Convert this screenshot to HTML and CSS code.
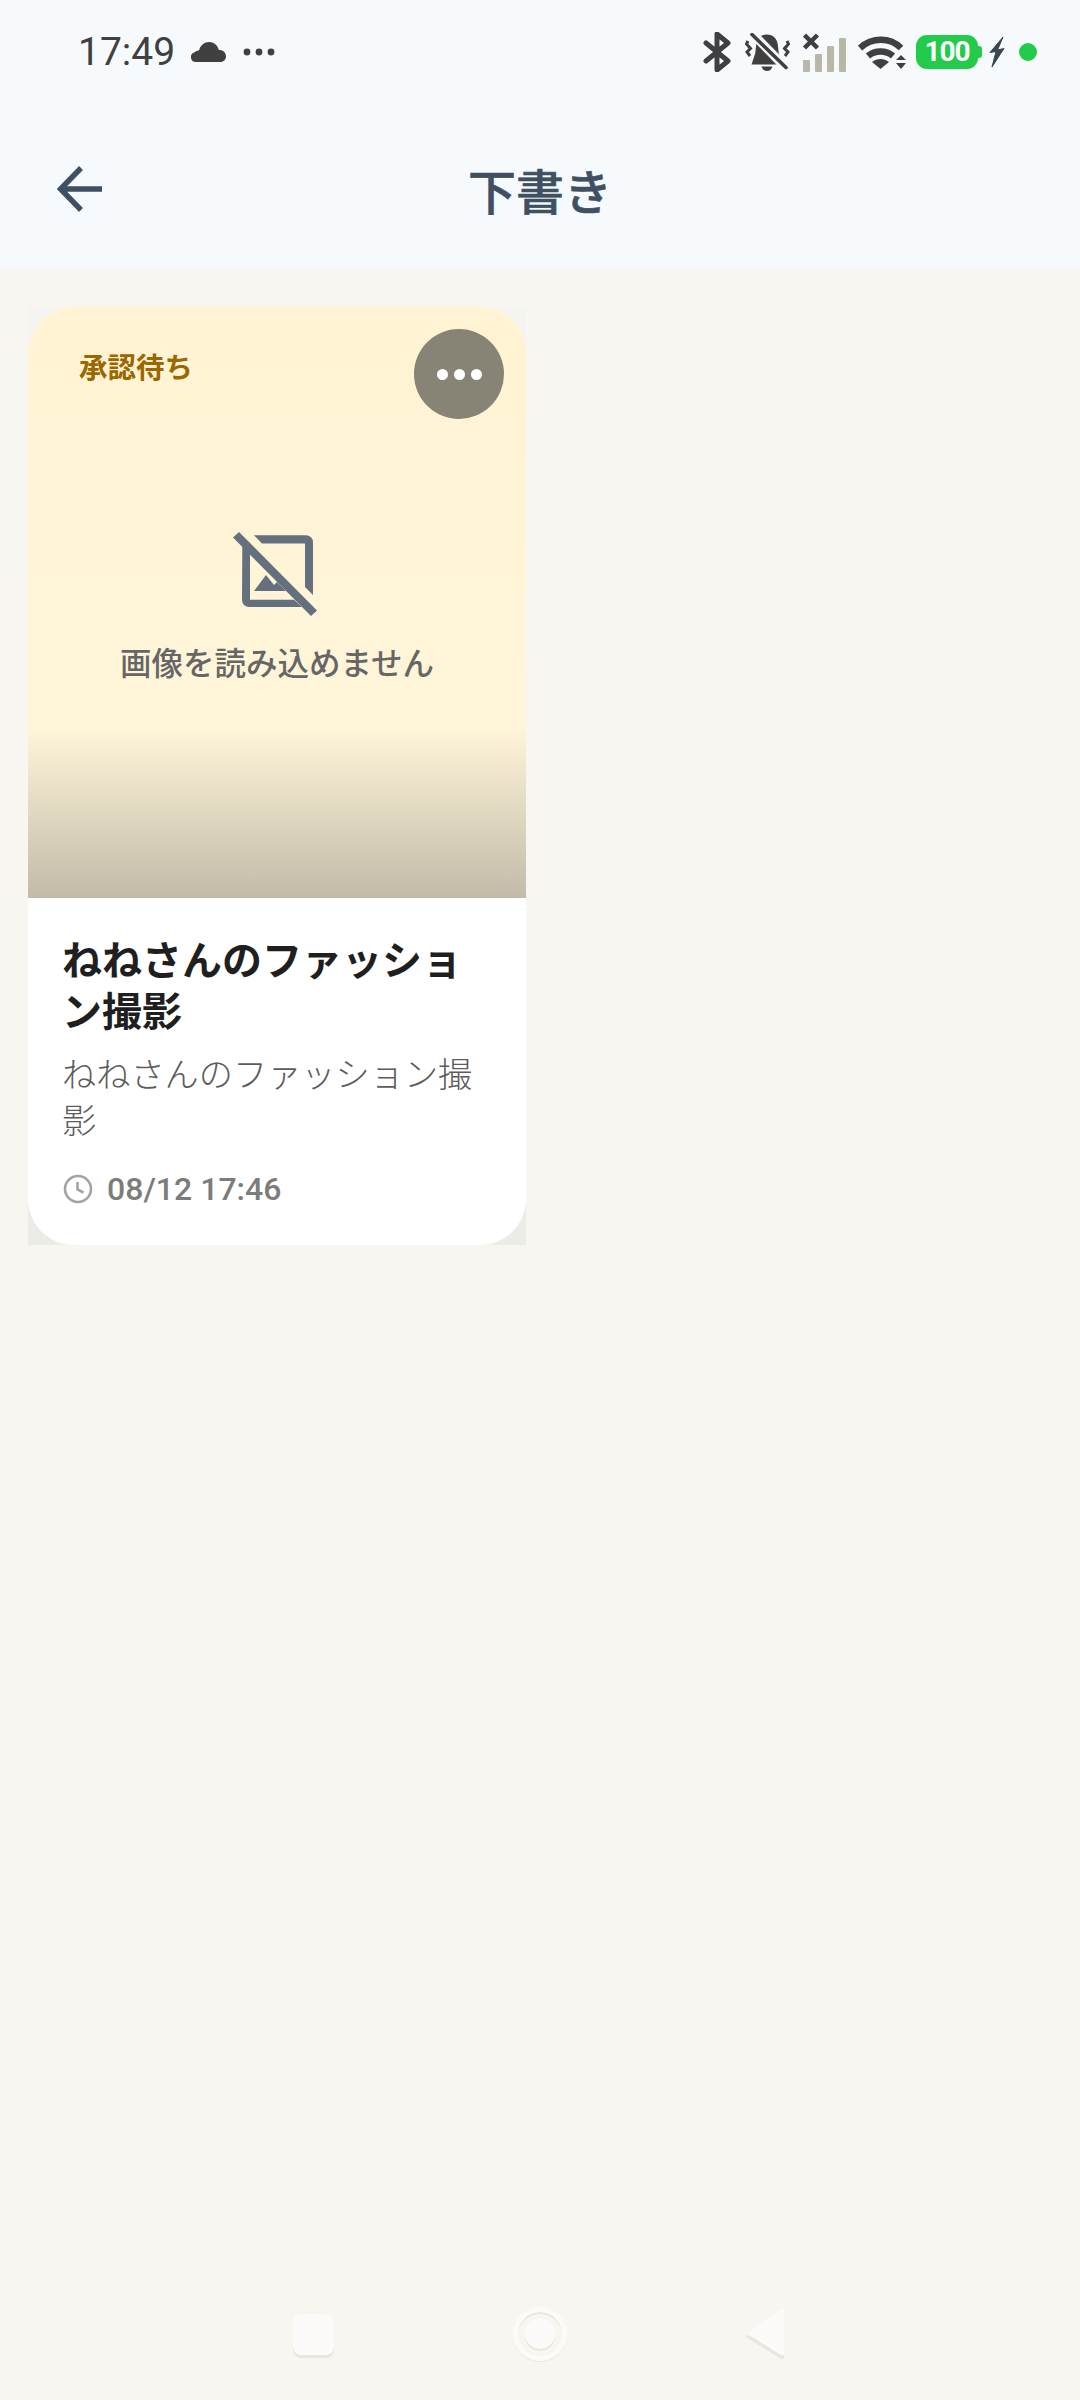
FILE: index.html
```html
<!DOCTYPE html>
<html lang="ja">

<head>
    <meta charset="UTF-8">
    <meta name="viewport" content="width=device-width, initial-scale=1.0">
    <title>下書き</title>
    <link rel="stylesheet" href="styles.css">
</head>

<body>
    <div class="page">
        <header class="top">
            <!-- Status bar -->
            <div class="status-bar">
                <div class="status-left">
                    <span class="clock">17:49</span>
                    <svg class="ic-cloud" width="35" height="20" viewBox="0 0 35 20">
                        <path fill="#404040" d="M5 20a5 5 0 0 1-1.500-9.800C5 9 6.500 8.500 8 8.500 9.500 3 13.500 0 18 0c5 0 8.500 3 9.800 8 3.500-.5 7.200 2.300 7.200 6.200 0 3.300-2.500 5.800-5.500 5.800z"/>
                    </svg>
                    <svg class="ic-more" width="32" height="8" viewBox="0 0 32 8" fill="#404040">
                        <circle cx="4" cy="4" r="3.400"/>
                        <circle cx="16" cy="4" r="3.400"/>
                        <circle cx="28" cy="4" r="3.400"/>
                    </svg>
                </div>
                <div class="status-right">
                    <svg class="ic-bt" width="28" height="40" viewBox="0 0 28 40" fill="none" stroke="#404040" stroke-width="5" stroke-linejoin="round" stroke-linecap="round">
                        <path d="M3 11l22 18-11 9V2l11 9L3 29"/>
                    </svg>
                    <svg class="ic-bell" width="45" height="38" viewBox="0 0 45 38">
                        <path fill="#404040" d="M22 1.500c6 0 10 4 10.800 10l1 9 3.700 11H6.500l3.700-11 1-9C12 5.500 16 1.500 22 1.500zM16.500 33.500h11c-1 3-3 4.500-5.500 4.500s-4.500-1.500-5.500-4.500z"/>
                        <path fill="none" stroke="#f6fafd" stroke-width="9" d="M4 -3L44 38"/>
                        <path fill="none" stroke="#404040" stroke-width="3.600" stroke-linecap="round" d="M7 1.500L41 34.500"/>
                        <path fill="none" stroke="#404040" stroke-width="3" d="M3 8l-1.500 3 4 4.500-3.500 3.500 3 4M42 8l1.500 3-4 4.500 3.500 3.500-3 4"/>
                    </svg>
                    <svg class="ic-signal" width="43" height="39" viewBox="0 0 43 39">
                        <path stroke="#404040" stroke-width="4.500" d="M1.500 2l13 13M14.500 2l-13 13"/>
                        <rect x="0" y="27" width="7" height="12" rx="1" fill="#b9b8ab"/>
                        <rect x="12" y="21" width="7" height="18" rx="1" fill="#b9b8a4"/>
                        <rect x="24" y="13" width="7" height="26" rx="1" fill="#b9b8a4"/>
                        <rect x="36" y="5" width="7" height="34" rx="1" fill="#b9b8a4"/>
                    </svg>
                    <svg class="ic-wifi" width="48" height="33" viewBox="0 0 48 33">
                        <path fill="none" stroke="#404040" stroke-width="6.500" d="M2 12C14 1 32 1 43 12"/>
                        <path fill="none" stroke="#404040" stroke-width="6.500" d="M10 20c7-6 18-6 25 0"/>
                        <path fill="#404040" d="M14 26c5-4 12-4 17 0l-8.500 7z"/>
                        <path fill="#404040" d="M43 19l5 5H38zM43 33l-5-6h10z"/>
                    </svg>
                    <div class="battery">
                        <span class="battery-level">100</span>
                        <span class="battery-tip"></span>
                    </div>
                    <svg class="ic-bolt" width="16" height="32" viewBox="0 0 16 32">
                        <path fill="#3a4550" stroke="#3a4550" stroke-width="1" stroke-linejoin="round" d="M14 1L1 16.500l6-1-4 15.500 12-18.500-6.500 1.500z"/>
                    </svg>
                    <span class="green-dot"></span>
                </div>
            </div>

            <!-- App bar -->
            <div class="app-bar">
                <svg class="back" width="46" height="46" viewBox="0 0 46 46" fill="none" stroke="#3e5064" stroke-width="5.500">
                    <path d="M24 2L3.500 23 24 44M4 23h41"/>
                </svg>
                <h1>下書き</h1>
            </div>
        </header>

        <main class="content">
            <div class="slot">
                <article class="card">
                    <div class="thumb">
                        <span class="badge">承認待ち</span>
                        <button class="more-btn">
                            <i></i><i></i><i></i>
                        </button>
                        <svg class="no-image" width="84" height="84" viewBox="0 0 84 84" fill="#64707e">
                            <path d="M21 3.300H73a7 7 0 0 1 7 7V63l-8-8V11.500H29z"/>
                            <path d="M9.300 14L17 22V67.700H61L69 75H16a7 7 0 0 1-7-7z"/>
                            <path d="M21 59L33 43l8 10 3-3 9 9z"/>
                            <path d="M6 0L84 78.500 78 84 0 5.500z"/>
                        </svg>
                        <p class="no-image-text">画像を読み込めません</p>
                    </div>
                    <div class="card-body">
                        <h2>ねねさんのファッション撮影</h2>
                        <p class="desc">ねねさんのファッション撮影</p>
                        <div class="date">
                            <svg width="30" height="30" viewBox="0 0 30 30" fill="none" stroke="#a3a3a0" stroke-width="2.600">
                                <circle cx="15" cy="15" r="13"/>
                                <path d="M14.500 8v7.500l6 3"/>
                            </svg>
                            <span>08/12 17:46</span>
                        </div>
                    </div>
                </article>
            </div>
        </main>

        <!-- Navigation bar -->
        <nav class="nav">
            <span class="nav-square"></span>
            <span class="nav-circle"><i></i></span>
            <svg class="nav-back" width="38" height="50" viewBox="0 0 38 50">
                <path fill="#e9e6de" d="M0 28L36 2h2v48h-3z"/>
                <path fill="#fcfbf9" d="M1 25L35 0q3-1 3 2v42q0 3-3 2z"/>
            </svg>
        </nav>
    </div>
</body>

</html>
```

FILE: styles.css
```css
* {
    box-sizing: border-box;
}

body {
    margin: 0;
    background-color: #f8f6f1;
    font-family: Roboto, "Noto Sans CJK JP", sans-serif;
}

.page {
    display: flex;
    flex-direction: column;
    height: 2400px;
}

.top {
    height: 268px;
    background-color: #f6fafd;
}

.status-bar {
    display: flex;
    justify-content: space-between;
    align-items: center;
    height: 104px;
    padding: 0 43px 0 78px;
}

.status-left,
.status-right {
    display: flex;
    align-items: center;
}

.clock {
    font-size: 39px;
    color: #404040;
}

.ic-cloud {
    margin-left: 16px;
}

.ic-more {
    margin-left: 17px;
}

.ic-bell {
    margin-left: 14px;
}

.ic-signal {
    margin-left: 13px;
}

.ic-wifi {
    margin-left: 12px;
}

.battery {
    display: flex;
    align-items: center;
    margin-left: 10px;
}

.battery-level {
    width: 62px;
    height: 34px;
    background-color: #22cc4a;
    border-radius: 11px;
    color: white;
    font-size: 28px;
    font-weight: 700;
    letter-spacing: -1px;
    line-height: 34px;
    text-align: center;
}

.battery-tip {
    width: 4px;
    height: 12px;
    background-color: #22cc4a;
    border-radius: 0 3px 3px 0;
}

.ic-bolt {
    margin-left: 7px;
}

.green-dot {
    width: 18px;
    height: 18px;
    margin-left: 14px;
    background-color: #22cc4a;
    border-radius: 50%;
}

.app-bar {
    position: relative;
    display: flex;
    justify-content: center;
    align-items: center;
    height: 170px;
}

.back {
    position: absolute;
    left: 57px;
    top: 62px;
}

h1 {
    margin: 0;
    font-family: "Noto Sans CJK JP", sans-serif;
    font-size: 48px;
    font-weight: 500;
    -webkit-text-stroke: 0.6px #3f5062;
    color: #3f5062;
}

.content {
    flex: 1;
    padding: 39px 0 0 28px;
}

.slot {
    width: 498px;
    background: linear-gradient(to bottom, #f4f4f0, #ebebe7);
}

.card {
    overflow: hidden;
    background: white;
    border-radius: 46px;
}

.thumb {
    position: relative;
    display: flex;
    flex-direction: column;
    align-items: center;
    height: 591px;
    padding-top: 225px;
    background: linear-gradient(to bottom, #fff3d3 0, #fff5d9 420px, #c3bba9 100%);
}

.badge {
    position: absolute;
    left: 51px;
    top: 38px;
    font-family: "Noto Sans CJK JP", sans-serif;
    font-size: 28.500px;
    font-weight: 700;
    color: #9a6700;
}

.more-btn {
    position: absolute;
    right: 22px;
    top: 22px;
    display: flex;
    justify-content: center;
    align-items: center;
    gap: 6px;
    width: 90px;
    height: 90px;
    padding: 0;
    background-color: #878375;
    border: none;
    border-radius: 50%;
}

.more-btn i {
    width: 11px;
    height: 11px;
    background-color: white;
    border-radius: 50%;
}

.no-image {
    margin-right: 5px;
}

.no-image-text {
    margin: 22px 0 0;
    font-family: "Noto Sans CJK JP", sans-serif;
    font-size: 31.500px;
    font-weight: 500;
    color: #666;
}

.card-body {
    height: 347px;
    padding: 35px 34px 0;
}

h2 {
    margin: 0;
    font-family: "Noto Sans CJK JP", sans-serif;
    font-size: 40px;
    font-weight: 700;
    line-height: 51px;
    color: #1f1f1f;
}

.desc {
    margin: 14px 0 0;
    font-family: "Noto Sans CJK JP", sans-serif;
    font-size: 34.200px;
    font-weight: 300;
    line-height: 46px;
    color: #5c5c5c;
}

.date {
    display: flex;
    align-items: center;
    gap: 14px;
    margin-top: 29px;
    font-size: 32px;
    font-weight: 500;
    color: #7c7c7a;
}

.date svg {
    margin-left: 1px;
}

.nav {
    display: flex;
    justify-content: center;
    align-items: center;
    gap: 179px;
    height: 130px;
    padding: 0 4px 2px 0;
}

.nav-square {
    width: 41px;
    height: 41px;
    background-color: #fcfbf9;
    border-radius: 8px;
    box-shadow: 0 3px 0 #e9e6de;
}

.nav-circle {
    display: flex;
    justify-content: center;
    align-items: center;
    width: 54px;
    height: 54px;
    border: 5px solid #fcfbf9;
    border-radius: 50%;
    box-shadow: 0 1px 0 #e9e6de, inset 0 2px 0 #e9e6de;
}

.nav-circle i {
    width: 30px;
    height: 30px;
    background-color: #fcfbf9;
    border-radius: 50%;
    box-shadow: 0 2px 0 #e9e6de;
}
```
